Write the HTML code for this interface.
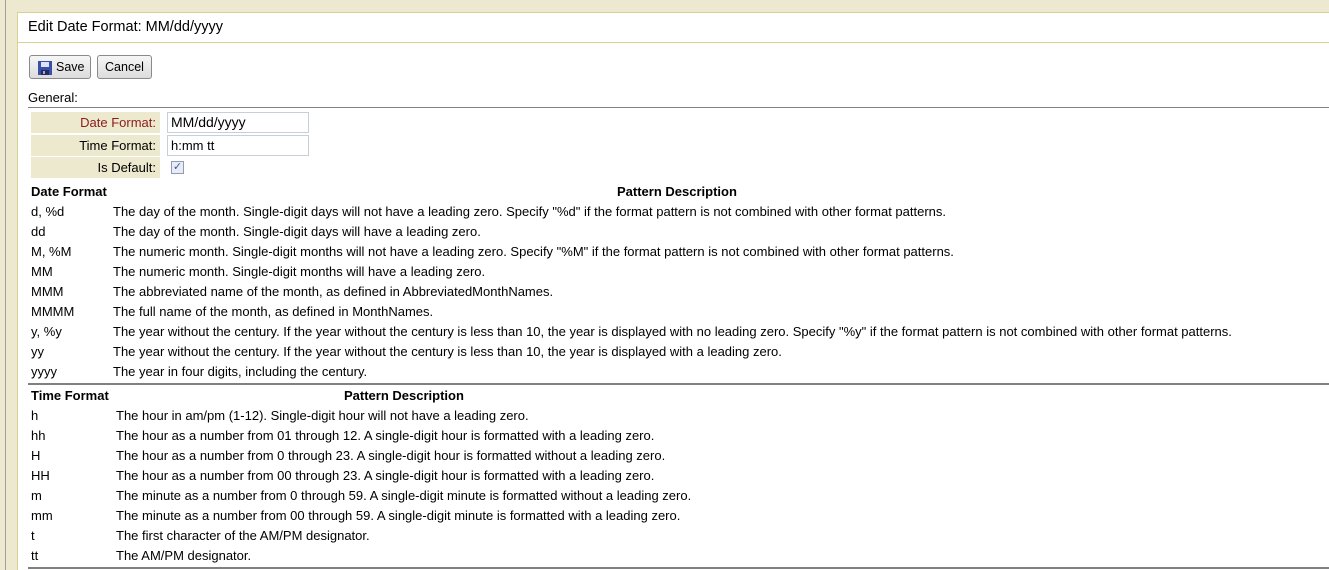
<!DOCTYPE html>
<html><head><style>
*{margin:0;padding:0;box-sizing:border-box}
body{width:1329px;height:570px;overflow:hidden;background:#fff;font-family:"Liberation Sans",Arial,sans-serif;font-size:13px;color:#000;position:relative}
.a{position:absolute}
.t{position:absolute;white-space:nowrap;line-height:14px}
.btn{position:absolute;top:55px;height:24px;border:1px solid #8a8a8a;border-radius:3px;background:linear-gradient(#f6f6f6,#dcdcdc);font-size:12.5px;line-height:22px}
.lab{position:absolute;left:31px;width:129px;height:21px;background:#ece9cf;text-align:right;padding-right:4px;line-height:21px}
.inp{position:absolute;left:167px;width:142px;height:21px;border:1px solid #c9cfd6;line-height:19px;padding-left:3px}
</style></head><body>
<div class="a" style="left:0;top:0;width:1329px;height:12px;background:#ede9d0"></div>
<div class="a" style="left:0;top:0;width:17px;height:570px;background:#ede9d0"></div>
<div class="a" style="left:5px;top:0;width:1px;height:570px;background:#a0a0a0"></div>
<div class="a" style="left:17px;top:12px;width:1px;height:558px;background:#d8d190"></div>
<div class="a" style="left:17px;top:12px;width:1312px;height:1px;background:#d8d190"></div>
<div class="a" style="left:17px;top:42px;width:1312px;height:1px;background:#d8d190"></div>
<div class="t" style="left:28px;top:19px;font-size:14.5px;line-height:16px">Edit Date Format: MM/dd/yyyy</div>
<div class="btn" style="left:29px;width:62px"><svg class="a" style="left:8px;top:5px" width="14" height="14" viewBox="0 0 14 14"><rect x="0" y="0" width="14" height="14" fill="#3a4fa8"/><rect x="3" y="1" width="8" height="5" fill="#dfe4f5"/><rect x="3" y="9" width="8" height="5" fill="#222a60"/><rect x="5" y="10" width="2" height="3" fill="#aab"/></svg><span class="a" style="left:26px;top:0">Save</span></div>
<div class="btn" style="left:97px;width:55px;text-align:center">Cancel</div>
<div class="t" style="left:28px;top:91px">General:</div>
<div class="a" style="left:28px;top:107px;width:1301px;height:1px;background:#808080"></div>
<div class="lab" style="top:112px;color:#8b1a1a">Date Format:</div>
<div class="lab" style="top:135px">Time Format:</div>
<div class="lab" style="top:157px">Is Default:</div>
<div class="inp" style="top:112px;font-size:14px">MM/dd/yyyy</div>
<div class="inp" style="top:135px">h:mm tt</div>
<div class="a" style="left:171px;top:161px;width:13px;height:13px;border:1px solid #8f9bb5;background:#e8ecf4;color:#3d5a9e;font-size:11px;line-height:11px;text-align:center">✓</div>
<div class="t" style="left:31px;top:185px;font-weight:bold">Date Format</div>
<div class="t" style="left:617px;top:185px;font-weight:bold">Pattern Description</div>
<div class="t" style="left:31px;top:205px">d, %d</div><div class="t" style="left:113px;top:205px">The day of the month. Single-digit days will not have a leading zero. Specify "%d" if the format pattern is not combined with other format patterns.</div>
<div class="t" style="left:31px;top:225px">dd</div><div class="t" style="left:113px;top:225px">The day of the month. Single-digit days will have a leading zero.</div>
<div class="t" style="left:31px;top:245px">M, %M</div><div class="t" style="left:113px;top:245px">The numeric month. Single-digit months will not have a leading zero. Specify "%M" if the format pattern is not combined with other format patterns.</div>
<div class="t" style="left:31px;top:265px">MM</div><div class="t" style="left:113px;top:265px">The numeric month. Single-digit months will have a leading zero.</div>
<div class="t" style="left:31px;top:285px">MMM</div><div class="t" style="left:113px;top:285px">The abbreviated name of the month, as defined in AbbreviatedMonthNames.</div>
<div class="t" style="left:31px;top:305px">MMMM</div><div class="t" style="left:113px;top:305px">The full name of the month, as defined in MonthNames.</div>
<div class="t" style="left:31px;top:325px">y, %y</div><div class="t" style="left:113px;top:325px">The year without the century. If the year without the century is less than 10, the year is displayed with no leading zero. Specify "%y" if the format pattern is not combined with other format patterns.</div>
<div class="t" style="left:31px;top:345px">yy</div><div class="t" style="left:113px;top:345px">The year without the century. If the year without the century is less than 10, the year is displayed with a leading zero.</div>
<div class="t" style="left:31px;top:365px">yyyy</div><div class="t" style="left:113px;top:365px">The year in four digits, including the century.</div>
<div class="a" style="left:28px;top:383px;width:1301px;height:2px;background:#808080"></div>
<div class="t" style="left:31px;top:389px;font-weight:bold">Time Format</div>
<div class="t" style="left:344px;top:389px;font-weight:bold">Pattern Description</div>
<div class="t" style="left:31px;top:409px">h</div><div class="t" style="left:116px;top:409px">The hour in am/pm (1-12). Single-digit hour will not have a leading zero.</div>
<div class="t" style="left:31px;top:429px">hh</div><div class="t" style="left:116px;top:429px">The hour as a number from 01 through 12. A single-digit hour is formatted with a leading zero.</div>
<div class="t" style="left:31px;top:449px">H</div><div class="t" style="left:116px;top:449px">The hour as a number from 0 through 23. A single-digit hour is formatted without a leading zero.</div>
<div class="t" style="left:31px;top:469px">HH</div><div class="t" style="left:116px;top:469px">The hour as a number from 00 through 23. A single-digit hour is formatted with a leading zero.</div>
<div class="t" style="left:31px;top:489px">m</div><div class="t" style="left:116px;top:489px">The minute as a number from 0 through 59. A single-digit minute is formatted without a leading zero.</div>
<div class="t" style="left:31px;top:509px">mm</div><div class="t" style="left:116px;top:509px">The minute as a number from 00 through 59. A single-digit minute is formatted with a leading zero.</div>
<div class="t" style="left:31px;top:529px">t</div><div class="t" style="left:116px;top:529px">The first character of the AM/PM designator.</div>
<div class="t" style="left:31px;top:549px">tt</div><div class="t" style="left:116px;top:549px">The AM/PM designator.</div>
<div class="a" style="left:28px;top:567px;width:1301px;height:2px;background:#808080"></div>
</body></html>
